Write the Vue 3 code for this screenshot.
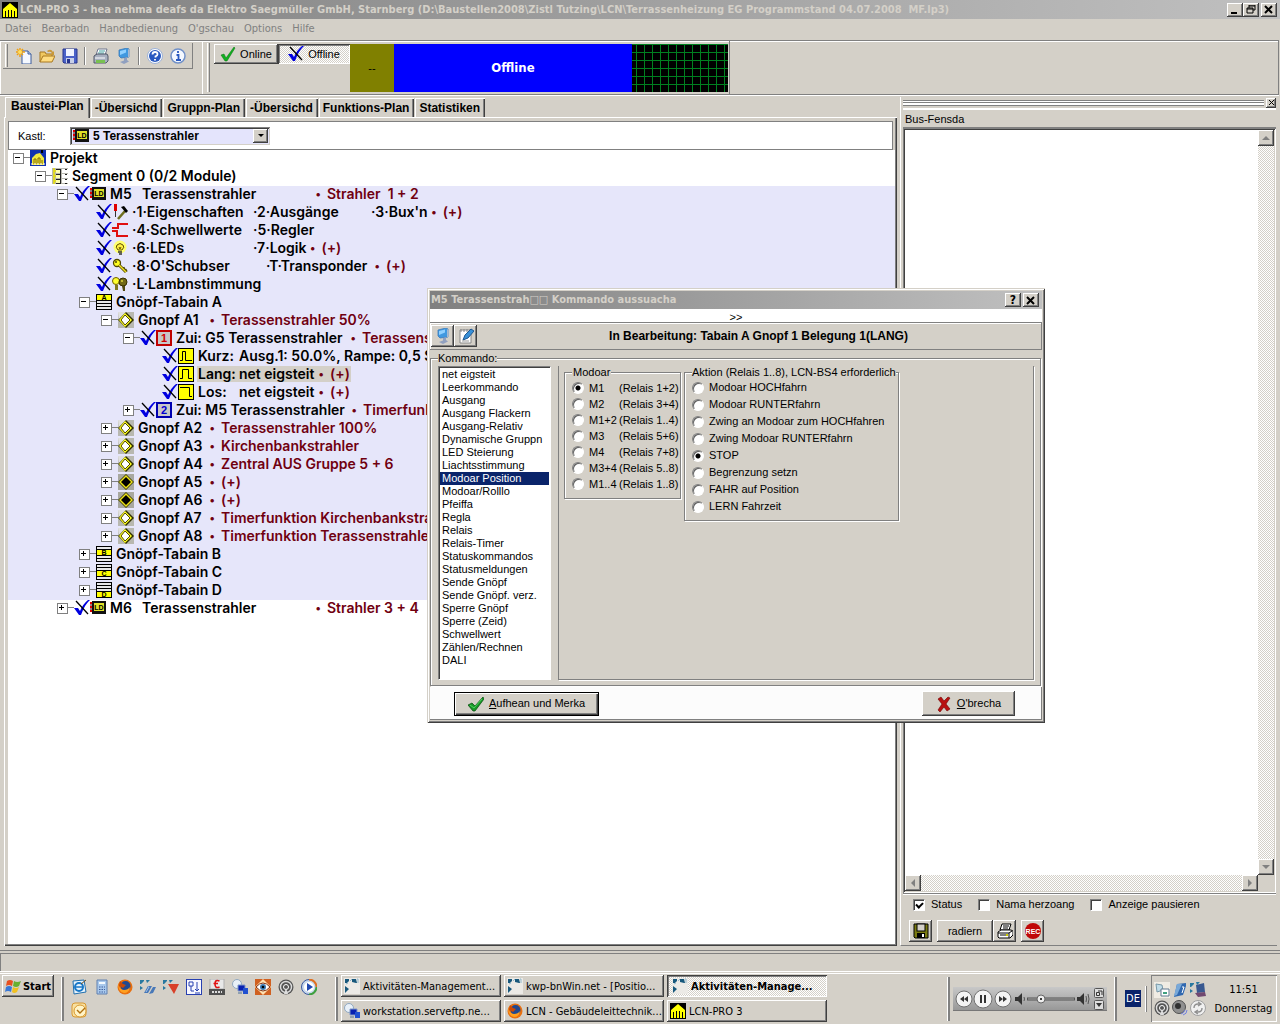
<script setup>
import { ref } from 'vue'

const icons = {
  logo: '<rect width="16" height="16" fill="#000"/><path d="M1 15V7l7-6 7 6v8h-2V9h-1v6h-2V8H9v7H7V8H6v7H4V9H3v6z" fill="#ff0"/><path d="M3 6h10L8 2z" fill="#ff0"/>',
  page: '<path d="M6 3h6l3 3v10H6z" fill="#f4f8ff" stroke="#3a5a9a"/><path d="M12 3v3h3" fill="#b8cef0" stroke="#3a5a9a"/><path d="M4 0v9M0 4h9M1 1l6 6M7 1L1 7" stroke="#f0a010" stroke-width="1.4"/><circle cx="4" cy="4" r="2" fill="#ffe060"/>',
  open: '<path d="M1 14V4h5l1 2h6v3" fill="#f0c860" stroke="#a87820"/><path d="M1 14l3-6h12l-3 6z" fill="#ffdc80" stroke="#a87820"/><path d="M8 3q4-3 6 1l1-1v4h-4l2-2q-2-2-4-1z" fill="#c89838"/>',
  save: '<path d="M1 1h14v14H2l-1-1z" fill="#4a62c8" stroke="#26348c"/><rect x="4" y="1" width="8" height="7" fill="#f0f4ff"/><rect x="4" y="10" width="8" height="5" fill="#c8d0e8"/><rect x="5" y="11" width="3" height="4" fill="#26348c"/>',
  print: '<path d="M5 1h9l-2 6H3z" fill="#fff" stroke="#707890"/><path d="M6 3h6M5 5h6" stroke="#40a0a0"/><path d="M1 8l3-2h10l1 2v5l-2 2H1z" fill="#a8b0c0" stroke="#505868"/><path d="M2 10h10" stroke="#fff"/><rect x="3" y="12" width="9" height="3" fill="#78c050"/>',
  pc: '<path d="M3 2l8-2 2 1v8l-8 1-2-2z" fill="#4098e0" stroke="#3878b8" stroke-width=".8"/><path d="M4 3l6-1.500v3L4 7z" fill="#90d0ff"/><path d="M12 1l1.500 1v7L12 9z" fill="#a8b8d0"/><path d="M8 10l3-1v3l2 1.500-5 2.500-4-2 4-1.500z" fill="#90a0c0"/>',
  help: '<circle cx="8" cy="8" r="7.500" fill="#fff" stroke="#9ab0d8"/><circle cx="8" cy="8" r="6" fill="#2858c0"/><path d="M5.500 6.500Q5.500 4 8 4t2.500 2.200Q10.500 7.500 8.500 8.300V9.500M8 11v1.500" fill="none" stroke="#fff" stroke-width="1.800"/>',
  info: '<circle cx="8" cy="8" r="7" fill="#f4f8ff" stroke="#7090c8" stroke-width="1.500"/><path d="M8 3v2M6.500 7H8.500v5M6 12h5" stroke="#2858c0" stroke-width="1.800" fill="none"/>',
  tick: '<path d="M1 9l3-1 2 4L14 1l1 1L7 15H5z" fill="#10b020" stroke="#087010" stroke-width=".5"/>',
  tickBold: '<path d="M0 9l4-2 3 3L15 1l1 2L7 15H5z" fill="#189828" stroke="#004808" stroke-width=".7"/><path d="M2 9l4 3 8-9" fill="none" stroke="#50d060"/>',
  cross: '<path d="M2 3l3-2 3 4 4-4 2 1-4 6 4 5-3 2-3-4-4 5-2-2 4-6z" fill="#b81010" stroke="#700000" stroke-width=".6"/>',
  off: '<path d="M0 8h4l2 3Q9 4 14 0h2Q11 4 7 15H5z" fill="#0000e0"/><path d="M2 1l12 13" stroke="#000" stroke-width="1.300"/>',
  project: '<rect width="16" height="16" fill="#1030b0"/><path d="M2 15V8l4-4 4-1 4 5v7z" fill="#f0e840"/><path d="M4 14V9h2v5M8 14V8h2v6M12 14v-4" stroke="#806800" fill="none"/><path d="M1 14h14" stroke="#fff" stroke-dasharray="2 1"/><path d="M11 0h2v3h-2z" fill="#000"/>',
  segment: '<rect width="16" height="16" fill="#b8b8b0"/><path d="M2 0v16M2 3h3M2 8h3M2 13h3" stroke="#e8e000" stroke-width="1.500"/><path d="M4 1h5v4H4zM4 6h5v4H4zM4 11h5v4H4z" fill="#ffffb0"/><path d="M4 1.500h5M4 6.500h5M4 11.500h5M4 15.500h5M8.500 1v14" stroke="#222" fill="none"/><path d="M10 3h6M10 8h6M10 13h6" stroke="#fff" stroke-width="4"/><path d="M13 1.500h2M13 6.500h2M13 11.500h2M13 15.500h2" stroke="#222"/>',
  module: '<path d="M0 3h3M0 7h3M0 11h3" stroke="#d00" stroke-width="2"/><path d="M0 5h3M0 9h3" stroke="#400"/><rect x="2" y="1" width="14" height="13" fill="#111"/><rect x="4" y="3" width="10" height="8" fill="#e0e028"/><text x="9" y="9.500" font-size="7" font-weight="700" text-anchor="middle" font-family="Liberation Sans, sans-serif">LD</text>',
  tools: '<path d="M2 0h3v7H2z" fill="#e00000"/><path d="M3.500 7v6" stroke="#333"/><path d="M6 15l7-8" stroke="#707020" stroke-width="2.500"/><path d="M9 3l3-1 4 5-2 2z" fill="#000"/>',
  threshold: '<path d="M16 2H6v4H0M0 9h5v5h11" fill="none" stroke="#e01010" stroke-width="2"/>',
  bulb: '<circle cx="8" cy="7" r="6.500" fill="#ffff70"/><path d="M6 10Q3 7 5 5q3-3 6 0 2 2-1 5z" fill="#fff040" stroke="#605000"/><path d="M6 12h4M7 14h3" stroke="#333" stroke-width="1.500"/><path d="M7 7l1 2 1-2" fill="none" stroke="#605000"/>',
  key: '<circle cx="5" cy="5" r="3.500" fill="#ffff20" stroke="#504800" stroke-width="1.300"/><circle cx="4" cy="4" r="1" fill="#504800"/><path d="M7 7l7 7M11 11l2-1M13 13l2-1" stroke="#504800" stroke-width="3"/><path d="M7 7l7 7" stroke="#f0e020" stroke-width="1.400"/>',
  bulbs: '<circle cx="4" cy="5" r="3.500" fill="#ffff30" stroke="#706000"/><path d="M3 9h3v5H3z" fill="#807820"/><circle cx="11" cy="6" r="4" fill="#706818" stroke="#383000"/><path d="M10 10h3v5h-2z" fill="#504810"/><circle cx="10" cy="5" r="1" fill="#e0d840"/>',
  diamond: '<rect width="16" height="16" fill="#b8b8b0"/><path d="M0 0h9L1 9z" fill="#e0e0e0"/><path d="M8 0l8 8-8 8-8-8z" fill="#303000"/><path d="M7 1l7 7-7 7-6-7z" fill="#ffff20"/><path d="M7 3l5 5-5 5-4-5z" fill="#fff" stroke="#504800"/>',
  diamondDark: '<rect width="16" height="16" fill="#a8a8a0"/><path d="M8 0l8 8-8 8-8-8z" fill="#303000"/><path d="M8 1l7 7-7 7-7-7z" fill="#e8e020"/><path d="M8 3l5 5-5 5-5-5z" fill="#000" stroke="#807800"/>',
  one: '<rect x="1" y="1" width="14" height="14" fill="#c8c8c8" stroke="#c00000" stroke-width="2"/><text x="8" y="12" font-size="11" font-weight="700" text-anchor="middle" fill="#d00000" font-family="Liberation Sans, sans-serif">1</text>',
  two: '<rect x="1" y="1" width="14" height="14" fill="#c8c8c8" stroke="#0000b0" stroke-width="2"/><text x="8" y="12" font-size="11" font-weight="700" text-anchor="middle" fill="#0000d0" font-family="Liberation Sans, sans-serif">2</text>',
  short: '<rect x=".5" y=".5" width="15" height="15" fill="#ffff00" stroke="#000"/><path d="M2 12.500h2.500v-9h3v9H14" fill="none" stroke="#000"/>',
  long: '<rect x=".5" y=".5" width="15" height="15" fill="#ffff00" stroke="#000"/><path d="M2 12.500h2.500v-9h6v9H14" fill="none" stroke="#000"/>',
  release: '<rect x=".5" y=".5" width="15" height="15" fill="#ffff00" stroke="#000"/><path d="M2 3.500h9.500v9H14" fill="none" stroke="#000"/>',
  ie: '<path d="M2 2l11-1 2 12-12 2z" fill="#e8f4fc" stroke="#2070b0"/><circle cx="8" cy="8" r="4" fill="none" stroke="#1878c8" stroke-width="2"/><path d="M5 8h6" stroke="#1878c8" stroke-width="1.500"/><path d="M10 5l5-4" stroke="#705020"/>',
  calc: '<path d="M3 1h10v14H3z" fill="#a8c8ec" stroke="#6080b0"/><path d="M5 3h6v2H5z" fill="#f4faff"/><path d="M5 8h6M5 10.500h6M5 13h6" stroke="#4060a0" stroke-dasharray="1.500 1"/>',
  firefox: '<circle cx="8" cy="8" r="7.500" fill="#e87010"/><circle cx="8.500" cy="7" r="5" fill="#204890"/><path d="M1 4q1 7 6 7 4 0 6-3-1 6-6 6-6-1-6-10z" fill="#ffa020"/><path d="M3 2l3 3 3 1-3 3-4-2z" fill="#c84808"/>',
  kwp: '<path d="M0 1h4v1l-3 3H0zM6 1h4l-3 3zM0 7l3 2-3 2z" fill="#2878a0"/><path d="M4 14l4-7h4l-4 7zM9 15l4-7h3l-3 6z" fill="#4878b8"/><path d="M8 8l1 0-3 5" stroke="#a0c0e8" fill="none"/>',
  kwpTask: '<rect width="16" height="16" fill="#eceae6"/><path d="M1 1h4v2L3 5H1zM8 1h4l1 4H12L8 4zM1 8l4 3-4 4z" fill="#18587c"/><path d="M6 3l2-2M2 6l2-1" stroke="#90b8cc"/><path d="M13 1h1v4" fill="none" stroke="#90b8cc"/>',
  kwpRed: '<path d="M0 1h4v1l-3 3H0zM6 1h4l-3 3zM0 7l3 2-3 2z" fill="#2878a0"/><path d="M5 5h11l-5 10z" fill="#d84028"/>',
  diagram: '<rect x=".5" y=".5" width="15" height="15" fill="#f8f8ff" stroke="#2840b0"/><path d="M3 3h4v4H3zM5 7v5h3M11 3v8M9 10l2 2 2-2M9 14h5" fill="none" stroke="#2840b0"/>',
  euro: '<rect x="1" y="0" width="14" height="10" fill="#e8e8e8" stroke="#b0b0b0"/><path d="M10.500 2Q6 0 6 5t4.500 3M4.500 4.500H9" fill="none" stroke="#e01010" stroke-width="1.600"/><rect x="0" y="10" width="16" height="6" fill="#505050"/><path d="M3 13h10" stroke="#ddd" stroke-width="2" stroke-dasharray="2 1"/>',
  remote: '<circle cx="5" cy="5" r="4.500" fill="#e8f0f8" stroke="#90a8c0"/><path d="M6 6h7v6H6z" fill="#0820b0" stroke="#8098c8"/><path d="M11 9h5v6h-5z" fill="#2050d0"/><path d="M6 14h4" stroke="#90a0b0" stroke-width="2"/>',
  eye: '<rect width="16" height="16" fill="#d06020"/><path d="M8 0l8 8-8 8-8-8z" fill="#ffe0b0"/><path d="M1 8q7-8 14 0-7 8-14 0z" fill="#fff" stroke="#803010"/><circle cx="8" cy="8" r="3" fill="#3878b0"/><circle cx="8" cy="8" r="1.300"/>',
  ring: '<circle cx="8" cy="8" r="7.500" fill="#555"/><circle cx="8" cy="8" r="5.500" fill="none" stroke="#ddd" stroke-width="1.400"/><circle cx="8" cy="8" r="2.500" fill="none" stroke="#fff"/><path d="M8 9l-2 6h4z" fill="#ddd"/>',
  player: '<circle cx="8" cy="8" r="7.500" fill="#c8d8ec" stroke="#3858a0"/><path d="M8 .5A7.500 7.500 0 0 1 15.500 8" fill="none" stroke="#e07020" stroke-width="2"/><path d="M15.500 8A7.500 7.500 0 0 1 8 15.500" fill="none" stroke="#40a040" stroke-width="2"/><circle cx="8" cy="8" r="5" fill="#fff"/><path d="M6 4l6 4-6 4z" fill="#2048b0"/>',
  outlook: '<rect x="1" y="1" width="14" height="14" rx="3" fill="#f8e0a0" stroke="#d89830"/><circle cx="9" cy="9" r="6" fill="#fff4c8" stroke="#d89830"/><path d="M6 8l3 3 5-5" fill="none" stroke="#b07010" stroke-width="1.400"/>',
  winflag: '<path d="M2 3q3-2 6 0L7 8Q4 6 1 8z" fill="#e85020"/><path d="M9 3q3 2 7 0l-2 5q-3 2-6 0z" fill="#68b030"/><path d="M1 9q3-2 6 0l-1 5Q3 12 0 14z" fill="#3878d8"/><path d="M8 9q3 2 6 0l-2 5q-3 2-5 0z" fill="#f0c020"/>',
  edit: '<path d="M2 2h11v13H2z" fill="#fff" stroke="#888"/><path d="M3 1v3M6 1v3M9 1v3M12 1v3" stroke="#888"/><path d="M5 12l2-5 6-6 3 2-6 7z" fill="#3890d8" stroke="#205890"/><path d="M4 13h7" stroke="#999"/>',
  disk: '<path d="M1 1h14v14H2l-1-1z" fill="#7a7a10" stroke="#000"/><rect x="4" y="1" width="8" height="7" fill="#d4d0c8" stroke="#000"/><rect x="4" y="10" width="8" height="5" fill="#000"/><rect x="9" y="11" width="2" height="3" fill="#fff"/>',
  printer: '<path d="M5 1h9l-2 6H3z" fill="#fff" stroke="#000"/><path d="M6 3h6M6 5h5" stroke="#000"/><path d="M1 9l3-2h10l2 1v4l-3 3H2l-1-1z" fill="#fff" stroke="#000"/><path d="M1 10h11l3-2M12 10v5M3 12h7" stroke="#000" fill="none"/><path d="M9 12h2" stroke="#cc0" stroke-width="2"/>',
  rec: '<circle cx="8" cy="8" r="8" fill="#c00808"/><text x="8" y="10.500" font-size="7" font-weight="700" text-anchor="middle" fill="#fff" font-family="Liberation Sans, sans-serif">REC</text>',
  trayA: '<rect width="16" height="16" fill="#f0ece4"/><path d="M2 2l6 1 1 5-6 2z" fill="#c0dce8" stroke="#7898a8"/><path d="M7 7h8v7H7z" fill="#fff" stroke="#607890"/><path d="M9 10h4v2H9z" fill="#40a080"/>',
  trayB: '<path d="M5 2l9-1 0 3-3 9-9 2 1-4z" fill="#3068b0"/><path d="M5 2l5 0-5 11-3 1z" fill="#78a8d8"/><path d="M10 5l2 0-2 6" stroke="#fff" fill="none"/>',
  trayC: '<path d="M0 1h4v1l-3 3H0zM6 0h4l-3 3zM0 7l3 2-3 2z" fill="#2878a0"/><path d="M6 3l8-2 1 9-8 1z" fill="#385890"/><path d="M5 11l10-1 1 4-8 1z" fill="#704870"/>',
  sound: '<circle cx="7" cy="7" r="6.500" fill="#909090" stroke="#505050"/><circle cx="6" cy="6" r="3" fill="#303030"/><path d="M11 15q4-1 4-5M9 14q3-1 4-4" fill="none" stroke="#7080e0"/>',
  sync: '<circle cx="8" cy="8" r="7.500" fill="#f0f0f0" stroke="#a0a0a0"/><path d="M4 8q0-4 4-4l2 0M8 2l3 2-3 2M12 8q0 4-4 4H6M8 14l-3-2 3-2" fill="none" stroke="#909090" stroke-width="1.400"/>',
}
// Key tables: a striped sheet with the yellow band of table A to D.
'ABCD'.split('').forEach((letter, i) => {
  const y = [0, 3, 6, 9][i]
  icons['table' + letter] =
    `<rect x=".5" y=".5" width="15" height="15" fill="#e8e8e8" stroke="#000"/><path d="M0 3.500h16M0 6.500h16M0 9.500h16M0 12.500h16" stroke="#000"/><rect x=".5" y="${y + 0.5}" width="15" height="6" fill="#ff0" stroke="#000"/><text x="8" y="${y + 6}" font-size="7" font-weight="700" text-anchor="middle" font-family="Liberation Sans, sans-serif">${letter}</text>`
})

const menu = ['Datei', 'Bearbadn', 'Handbedienung', "O'gschau", 'Options', 'Hilfe']
const tabs = ['Baustei-Plan', '-Übersichd', 'Gruppn-Plan', '-Übersichd', 'Funktions-Plan', 'Statistiken']

// Each tree row: level, expander, optional offline mark, icon, text columns and a remark.
const t = (text, width) => ({ text, width })
const rows = [
  { level: 0, exp: '−', icon: 'project', cols: [t('Projekt')] },
  { level: 1, exp: '−', icon: 'segment', cols: [t('Segment 0 (0/2 Module)')] },
  { level: 2, exp: '−', off: true, icon: 'module', cols: [t('M5', 32), t('Terassenstrahler', 170)], note: 'Strahler\u00a0 1 + 2', hl: true },
  { level: 3, off: true, icon: 'tools', cols: [t('·1·Eigenschaften', 121), t('·2·Ausgänge', 118), t("·3·Bux'n")], note: '(+)', hl: true },
  { level: 3, off: true, icon: 'threshold', cols: [t('·4·Schwellwerte', 121), t('·5·Regler')], hl: true },
  { level: 3, off: true, icon: 'bulb', cols: [t('·6·LEDs', 121), t('·7·Logik')], note: '(+)', hl: true },
  { level: 3, off: true, icon: 'key', cols: [t("·8·O'Schubser", 134), t('·T·Transponder', 105)], note: '(+)', hl: true },
  { level: 3, off: true, icon: 'bulbs', cols: [t('·L·Lambnstimmung')], hl: true },
  { level: 3, exp: '−', icon: 'tableA', cols: [t('Gnöpf-Tabain A')], hl: true },
  { level: 4, exp: '−', icon: 'diamond', cols: [t('Gnopf A1', 68)], note: 'Terassenstrahler 50%', hl: true },
  { level: 5, exp: '−', off: true, icon: 'one', cols: [t('Zui: G5 Terassenstrahler', 171)], note: 'Terassenstrahler 50%', hl: true },
  { level: 6, off: true, icon: 'short', cols: [t('Kurz:', 41), t('Ausg.1: 50.0%, Rampe: 0,5 S')], hl: true },
  { level: 6, off: true, icon: 'long', cols: [t('Lang:', 41), t('net eigsteit', 76)], note: '(+)', hl: true, selected: true },
  { level: 6, off: true, icon: 'release', cols: [t('Los:', 41), t('net eigsteit', 76)], note: '(+)', hl: true },
  { level: 5, exp: '+', off: true, icon: 'two', cols: [t('Zui: M5 Terassenstrahler', 172)], note: 'Timerfunktion', hl: true },
  { level: 4, exp: '+', icon: 'diamond', cols: [t('Gnopf A2', 68)], note: 'Terassenstrahler 100%', hl: true },
  { level: 4, exp: '+', icon: 'diamond', cols: [t('Gnopf A3', 68)], note: 'Kirchenbankstrahler', hl: true },
  { level: 4, exp: '+', icon: 'diamond', cols: [t('Gnopf A4', 68)], note: 'Zentral AUS Gruppe 5 + 6', hl: true },
  { level: 4, exp: '+', icon: 'diamondDark', cols: [t('Gnopf A5', 68)], note: '(+)', hl: true },
  { level: 4, exp: '+', icon: 'diamondDark', cols: [t('Gnopf A6', 68)], note: '(+)', hl: true },
  { level: 4, exp: '+', icon: 'diamond', cols: [t('Gnopf A7', 68)], note: 'Timerfunktion Kirchenbankstrahler', hl: true },
  { level: 4, exp: '+', icon: 'diamond', cols: [t('Gnopf A8', 68)], note: 'Timerfunktion Terassenstrahler', hl: true },
  { level: 3, exp: '+', icon: 'tableB', cols: [t('Gnöpf-Tabain B')], hl: true },
  { level: 3, exp: '+', icon: 'tableC', cols: [t('Gnöpf-Tabain C')], hl: true },
  { level: 3, exp: '+', icon: 'tableD', cols: [t('Gnöpf-Tabain D')], hl: true },
  { level: 2, exp: '+', off: true, icon: 'module', cols: [t('M6', 32), t('Terassenstrahler', 170)], note: 'Strahler 3 + 4' },
]

const commands = [
  'net eigsteit', 'Leerkommando', 'Ausgang', 'Ausgang Flackern', 'Ausgang-Relativ', 'Dynamische Gruppn',
  'LED Steierung', 'Liachtsstimmung', 'Modoar Position', 'Modoar/Rolllo', 'Pfeiffa', 'Regla', 'Relais',
  'Relais-Timer', 'Statuskommandos', 'Statusmeldungen', 'Sende Gnöpf', 'Sende Gnöpf. verz.', 'Sperre Gnöpf',
  'Sperre (Zeid)', 'Schwellwert', 'Zählen/Rechnen', 'DALI',
]
const command = ref('Modoar Position')

const motors = [
  ['M1', '(Relais 1+2)'], ['M2', '(Relais 3+4)'], ['M1+2', '(Relais 1..4)'], ['M3', '(Relais 5+6)'],
  ['M4', '(Relais 7+8)'], ['M3+4', '(Relais 5..8)'], ['M1..4', '(Relais 1..8)'],
]
const motor = ref('M1')
const actions = [
  'Modoar HOCHfahrn', 'Modoar RUNTERfahrn', 'Zwing an Modoar zum HOCHfahren', 'Zwing Modoar RUNTERfahrn',
  'STOP', 'Begrenzung setzn', 'FAHR auf Position', 'LERN Fahrzeit',
]
const action = ref('STOP')

const status = ref(true)
const fetchNames = ref(false)
const paused = ref(false)

const quick = ['ie', 'calc', 'firefox', 'kwp', 'kwpRed', 'diagram', 'euro', 'remote', 'eye', 'ring', 'player', 'outlook']
const tasks = [
  { icon: 'kwpTask', text: 'Aktivitäten-Management...' },
  { icon: 'kwpTask', text: 'kwp-bnWin.net - [Positio...' },
  { icon: 'kwpTask', text: 'Aktivitäten-Manage...', active: true },
  { icon: 'remote', text: 'workstation.serveftp.ne...' },
  { icon: 'firefox', text: 'LCN - Gebäudeleittechnik...' },
  { icon: 'logo', text: 'LCN-PRO 3' },
]
const tray = ['trayA', 'trayB', 'trayC', 'ring', 'sound', 'sync']
</script>

<template>
  <div class="desktop">
    <header class="titlebar">
      <svg class="ic" viewBox="0 0 16 16" v-html="icons.logo"></svg>
      <h1>LCN-PRO 3 - hea nehma deafs da Elektro Saegmüller GmbH, Starnberg (D:\Baustellen2008\Zistl Tutzing\LCN\Terrassenheizung EG Programmstand 04.07.2008&nbsp; MF.lp3)</h1>
      <div class="winbtns">
        <button class="raised" aria-label="Minimieren"><svg viewBox="0 0 10 9"><path d="M1 7h6v2H1z" /></svg></button>
        <button class="raised" aria-label="Wiederherstellen"><svg viewBox="0 0 10 9"><path d="M3 0h6v5H7M3 1h6M3 0v3M1 3h6v5H1zM1 4h6" fill="none" stroke="#000" /></svg></button>
        <button class="raised close" aria-label="Schließen"><svg viewBox="0 0 10 9"><path d="M1 1l7 7M8 1L1 8" stroke="#000" stroke-width="2" /></svg></button>
      </div>
    </header>

    <nav class="menu">
      <a v-for="m in menu" :key="m" href="#">{{ m }}</a>
    </nav>

    <section class="coolbar">
      <div class="band first">
        <div class="tools">
          <span class="grip"></span>
          <button aria-label="Neu"><svg class="ic" viewBox="0 0 16 16" v-html="icons.page"></svg></button>
          <button aria-label="Öffnen"><svg class="ic" viewBox="0 0 16 16" v-html="icons.open"></svg></button>
          <button aria-label="Speichern"><svg class="ic" viewBox="0 0 16 16" v-html="icons.save"></svg></button>
          <span class="sep"></span>
          <button aria-label="Drucken"><svg class="ic" viewBox="0 0 16 16" v-html="icons.print"></svg></button>
          <button aria-label="Bus"><svg class="ic" viewBox="0 0 16 16" v-html="icons.pc"></svg></button>
          <span class="sep"></span>
          <button aria-label="Hilfe"><svg class="ic" viewBox="0 0 16 16" v-html="icons.help"></svg></button>
          <button aria-label="Info"><svg class="ic" viewBox="0 0 16 16" v-html="icons.info"></svg></button>
        </div>
      </div>
      <div class="band second">
        <span class="grip"></span>
        <button class="mode raised"><svg class="ic" viewBox="0 0 16 16" v-html="icons.tick"></svg>Online</button>
        <button class="mode offmode pressed"><svg class="ic" viewBox="0 0 16 16" v-html="icons.off"></svg>Offline</button>
        <div class="lamp">--</div>
        <div class="state">Offline</div>
        <div class="scope"></div>
      </div>
    </section>

    <main>
      <section class="left">
        <div class="tabs" role="tablist">
          <button v-for="(tab, i) in tabs" :key="i" role="tab" :class="{ on: i === 0 }">{{ tab }}</button>
        </div>
        <div class="page">
          <div class="filter">
            <label for="kastl">Kastl:</label>
            <div class="combo">
              <svg class="ic" viewBox="0 0 16 16" v-html="icons.module"></svg>
              <select id="kastl"><option>5 Terassenstrahler</option></select>
              <span class="drop raised"><i class="tri down black"></i></span>
            </div>
          </div>
          <ul class="tree">
            <li v-for="(r, i) in rows" :key="i" :class="{ hl: r.hl }" :style="{ paddingLeft: 5 + 22 * r.level + 'px' }">
              <span class="node"><span v-if="r.exp" class="exp" :class="{ plus: r.exp === '+' }"></span></span>
              <svg v-if="r.off" class="ic" viewBox="0 0 16 16" v-html="icons.off"></svg>
              <svg class="ic" viewBox="0 0 16 16" v-html="icons[r.icon]"></svg>
              <span class="label" :class="{ selected: r.selected }">
                <span v-for="(c, j) in r.cols" :key="j" :style="c.width ? { width: c.width + 'px' } : null">{{ c.text }}</span>
                <span v-if="r.note" class="note"><b>•</b>{{ r.note }}</span>
              </span>
            </li>
          </ul>
        </div>
      </section>

      <aside class="right">
        <div class="dockbar"><span class="lines"></span><button class="raised" aria-label="Schließen"><svg viewBox="0 0 7 7"><path d="M1 1l5 5M6 1L1 6" stroke="#000" /></svg></button></div>
        <h2>Bus-Fensda</h2>
        <div class="memo">
          <textarea aria-label="Bus-Fensda"></textarea>
          <div class="vbar"><span class="raised"><i class="tri up"></i></span><span class="raised"><i class="tri down"></i></span></div>
          <div class="hbar"><span class="raised"><i class="tri lt"></i></span><span class="raised"><i class="tri rt"></i></span></div>
        </div>
        <div class="checks">
          <label><input v-model="status" type="checkbox" />Status</label>
          <label><input v-model="fetchNames" type="checkbox" />Nama herzoang</label>
          <label><input v-model="paused" type="checkbox" />Anzeige pausieren</label>
        </div>
        <div class="actions">
          <button class="raised sq" aria-label="Speichern"><svg class="ic" viewBox="0 0 16 16" v-html="icons.disk"></svg></button>
          <button class="raised wide">radiern</button>
          <button class="raised sq" aria-label="Drucken"><svg class="ic" viewBox="0 0 16 16" v-html="icons.printer"></svg></button>
          <button class="raised sq rec" aria-label="Aufnahme"><svg class="ic" viewBox="0 0 16 16" v-html="icons.rec"></svg></button>
        </div>
      </aside>
    </main>

    <div class="statusbar"></div>

    <footer class="taskbar">
      <button class="start raised"><svg class="ic" viewBox="0 0 16 16" v-html="icons.winflag"></svg>Start</button>
      <span class="tsep"></span>
      <div class="quick">
        <button v-for="q in quick" :key="q" :aria-label="q"><svg class="ic" viewBox="0 0 16 16" v-html="icons[q]"></svg></button>
      </div>
      <span class="tsep"></span>
      <div class="tasks">
        <button v-for="(k, i) in tasks" :key="i" :class="k.active ? 'pressed' : 'raised'">
          <svg class="ic" viewBox="0 0 16 16" v-html="icons[k.icon]"></svg><span>{{ k.text }}</span>
        </button>
      </div>
      <span class="tsep"></span>
      <div class="player">
        <svg width="154" height="24" viewBox="0 0 154 24">
          <g fill="#f4f4f4" stroke="#707070"><circle cx="11" cy="12" r="8" /><circle cx="30" cy="12" r="9" /><circle cx="50" cy="12" r="8" /></g>
          <path d="M11 9v6l-4-3zM15 9v6l-4-3zM46 9v6l4-3zM50 9v6l4-3zM27 8h2v8h-2zM31 8h2v8h-2zM62 10h3l4-4v12l-4-4h-3zM124 10h3l4-4v12l-4-4h-3z" fill="#333" />
          <path d="M71 10q1 2 0 4M133 9q1 3 0 6M135 7q2 5 0 10" fill="none" stroke="#555" />
          <path d="M74 12h48" stroke="#555" stroke-width="3" /><path d="M75 12h46" stroke="#aaa" />
          <circle cx="88" cy="12" r="4" fill="#eee" stroke="#666" /><circle cx="88" cy="12" r="1" />
          <g fill="#ddd" stroke="#555"><rect x="141.500" y="1.500" width="9" height="9" rx="1" /><rect x="141.500" y="13.500" width="9" height="9" rx="1" /></g>
          <path d="M143.500 5.500h3v3h-3zM145 4h4v4" fill="none" stroke="#333" /><path d="M143 16h6l-3 4z" fill="#333" />
        </svg>
      </div>
      <span class="tsep"></span>
      <div class="lang">DE</div>
      <span class="tsep small"></span>
      <div class="tray">
        <div class="trayicons"><svg v-for="(k, i) in tray" :key="i" class="ic" viewBox="0 0 16 16" v-html="icons[k]"></svg></div>
        <div class="clock"><time>11:51</time><span>Donnerstag</span></div>
      </div>
    </footer>

    <section class="dialog" role="dialog" aria-labelledby="dlg-title">
      <div class="dtitle">
        <h2 id="dlg-title">M5 Terassenstrah□□ Kommando aussuacha</h2>
        <button class="raised" aria-label="Hilfe">?</button>
        <button class="raised" aria-label="Schließen"><svg viewBox="0 0 10 9"><path d="M1 1l7 7M8 1L1 8" stroke="#000" stroke-width="2" /></svg></button>
      </div>
      <div class="more">&gt;&gt;</div>
      <div class="dtools">
        <button class="raised sq" aria-label="Modul"><svg class="ic" viewBox="0 0 16 16" v-html="icons.pc"></svg></button>
        <button class="raised sq" aria-label="Bearbeiten"><svg class="ic" viewBox="0 0 16 16" v-html="icons.edit"></svg></button>
        <strong>In Bearbeitung: Tabain A Gnopf 1 Belegung 1(LANG)</strong>
      </div>
      <fieldset class="outer">
        <legend><label for="cmd">Kommando:</label></legend>
        <div class="body">
          <select id="cmd" v-model="command" size="24">
            <option v-for="c in commands" :key="c">{{ c }}</option>
          </select>
          <div class="panel">
            <fieldset class="motor">
              <legend>Modoar</legend>
              <label v-for="m in motors" :key="m[0]"><input v-model="motor" type="radio" name="motor" :value="m[0]" /><span>{{ m[0] }}</span>{{ m[1] }}</label>
            </fieldset>
            <fieldset class="action">
              <legend>Aktion (Relais 1..8), LCN-BS4 erforderlich</legend>
              <label v-for="a in actions" :key="a"><input v-model="action" type="radio" name="action" :value="a" />{{ a }}</label>
            </fieldset>
          </div>
        </div>
      </fieldset>
      <div class="dfoot">
        <button class="ok"><svg class="ic" viewBox="0 0 16 16" v-html="icons.tickBold"></svg><span><u>A</u>ufhean und Merka</span></button>
        <button class="cancel raised"><svg class="ic" viewBox="0 0 16 16" v-html="icons.cross"></svg><span><u>O</u>'brecha</span></button>
      </div>
    </section>
  </div>
</template>

<style>
body { margin: 0; background: #d4d0c8; }
</style>

<style scoped>
* { box-sizing: border-box; }
.desktop {
  --ui: "DejaVu Sans Condensed", "DejaVu Sans", sans-serif;
  position: relative;
  min-height: 100vh;
  display: flex;
  flex-direction: column;
  background: #d4d0c8;
  color: #000;
  font: 11px/13px "Liberation Sans", Arial, sans-serif;
  overflow: hidden;
}
button, select, textarea { font: inherit; color: inherit; margin: 0; padding: 0; border: 0; background: #d4d0c8; border-radius: 0; outline: 0; }
button { display: flex; align-items: center; justify-content: center; white-space: nowrap; }
h1, h2 { margin: 0; font: inherit; white-space: nowrap; }
.ic { width: 16px; height: 16px; flex: none; display: block; }
.raised { background: #d4d0c8; box-shadow: inset -1px -1px #404040, inset 1px 1px #fff, inset -2px -2px #808080; }
.pressed {
  background: repeating-conic-gradient(#fff 0 25%, #d4d0c8 0 50%) 0 0 / 2px 2px;
  box-shadow: inset 1px 1px #404040, inset -1px -1px #fff, inset 2px 2px #808080;
}

.titlebar { height: 19px; display: flex; align-items: center; padding: 0 3px 0 2px; background: linear-gradient(90deg, #808080, #c0c0c0); color: #d4d0c8; }
.titlebar h1 { font: bold 11px/18px var(--ui); margin-left: 2px; flex: 1; min-width: 0; overflow: hidden; }
.winbtns { display: flex; }
.winbtns button { width: 16px; height: 14px; }
.winbtns svg { width: 10px; height: 9px; }
.winbtns .close { margin-left: 2px; }

.menu { height: 21px; display: flex; gap: 10px; padding: 3px 5px; font: 11px/14px var(--ui); }
.menu a { color: #808080; text-decoration: none; }

.coolbar { height: 55px; display: flex; margin-right: 1px; border: 1px solid #808080; border-left: 0; box-shadow: inset 0 1px #fff, 0 1px #fff; }
.band { padding: 2px 0 2px 2px; }
.first { width: 202px; border-left: 1px solid #fff; }
.second { border-left: 1px solid #fff; box-shadow: inset -1px 0 #808080; display: flex; align-items: flex-start; padding-left: 4px; padding-right: 2px; }
.tools { width: 190px; height: 26px; display: flex; align-items: center; border-right: 1px solid #808080; border-bottom: 1px solid #808080; }
.tools button { width: 23px; height: 22px; }
.grip { width: 3px; align-self: stretch; margin: 1px 4px 1px 2px; background: #d4d0c8; border-left: 1px solid #fff; border-right: 1px solid #808080; }
.second .grip { margin: 0 4px 0 0; }
.sep { width: 2px; height: 18px; margin: 0 3px; border-left: 1px solid #808080; border-right: 1px solid #fff; }
.mode { width: 64px; height: 20px; gap: 4px; margin-top: 1px; }
.offmode { width: 72px; }
.lamp { width: 44px; height: 48px; background: #808000; margin-top: 1px; text-align: center; line-height: 48px; }
.state { width: 238px; height: 48px; background: #00f; color: #fff; margin-top: 1px; text-align: center; font: bold 13px/48px var(--ui); }
.scope {
  width: 96px; height: 48px; margin-top: 1px; background-color: #000;
  background-image: linear-gradient(90deg, #008020 1px, transparent 1px), linear-gradient(#008020 1px, transparent 1px);
  background-size: 8px 8px; background-position: 4px 0;
}

main { flex: 1; display: flex; gap: 3px; padding: 2px 3px 4px 4px; border-bottom: 1px solid #808080; min-height: 0; }
.left { flex: 1; min-width: 0; display: flex; flex-direction: column; }
.tabs { display: flex; height: 20px; align-items: flex-end; padding-left: 1px; gap: 1px; position: relative; z-index: 1; }
.tabs button { height: 19px; padding: 1px 5px 0 4px; font-weight: bold; font-size: 12px; box-shadow: inset 1px 1px #fff, inset -1px 0 #404040, inset -2px 0 #808080; }
.tabs .on { height: 21px; margin-bottom: -1px; padding: 0 6px 2px; }
.page { flex: 1; display: flex; flex-direction: column; padding: 4px 2px 2px 4px; box-shadow: inset 1px 1px #fff, inset -1px -1px #404040, inset -2px -2px #808080; }
.filter { height: 29px; display: flex; align-items: center; padding-left: 9px; background: #fff; border: 1px solid #808080; margin-right: 2px; }
.filter label { width: 52px; padding-top: 2px; }
.combo { position: relative; width: 200px; height: 18px; background: #e4e4fc; display: flex; align-items: center; padding: 0 2px 0 3px; box-shadow: inset 1px 1px #808080, inset -1px -1px #d4d0c8, inset 2px 2px #404040; }
.combo select { flex: 1; min-width: 0; appearance: none; background: transparent; font-weight: bold; font-size: 12px; padding-left: 4px; height: 14px; line-height: 14px; }
.drop { width: 15px; height: 14px; display: grid; place-items: center; pointer-events: none; }
.tri { width: 0; height: 0; border: 4px solid transparent; }
.up { border-top: 0; border-bottom-color: #808080; }
.down { border-bottom: 0; border-top-color: #808080; }
.lt { border-left: 0; border-right-color: #808080; }
.rt { border-right: 0; border-left-color: #808080; }
.black { border-width: 3px 3px 0; border-top-color: #000; }

.tree { flex: 1; margin: 0; padding: 0; list-style: none; background: #fff; font: 600 14px/16px Inter, "Liberation Sans", sans-serif; }
.tree li { height: 18px; padding-bottom: 2px; display: flex; align-items: center; white-space: nowrap; overflow: hidden; }
.hl { background: #e6e6fa; }
.node { width: 17px; height: 10px; flex: none; display: flex; }
.exp { width: 17px; height: 9px; background: linear-gradient(#808080, #808080) 9px 4px / 8px 1px no-repeat; display: flex; }
.exp::before { content: ""; width: 9px; height: 9px; border: 1px solid #808080; background: linear-gradient(#000, #000) 1px 3px / 5px 1px no-repeat #fff; }
.plus::before { background: linear-gradient(#000, #000) 1px 3px / 5px 1px no-repeat, linear-gradient(#000, #000) 3px 1px / 1px 5px no-repeat, #fff; }
.label { display: flex; margin-left: 3px; padding: 0 1px; height: 16px; }
.label > span { flex: none; }
.selected { background: #d4d0c8; }
.note { color: #700010; }
.note b { display: inline-block; width: 15px; padding-left: 4px; font-size: 11px; line-height: 10px; vertical-align: 1px; }

.right { flex: 0 0 377px; display: flex; flex-direction: column; padding: 0 1px 0 2px; border-left: 1px solid #fff; border-bottom: 1px solid #808080; }
.dockbar { height: 13px; display: flex; align-items: center; gap: 2px; border-bottom: 2px solid #fff; }
.lines { flex: 1; height: 6px; border-top: 1px solid #808080; border-bottom: 1px solid #808080; background: linear-gradient(#fff 1px, #808080 1px 2px, #fff 2px); }
.dockbar button { width: 10px; height: 10px; }
.dockbar svg { width: 7px; height: 7px; }
.right h2 { height: 18px; line-height: 18px; padding-left: 2px; border-bottom: 1px solid #808080; }
.memo { flex: 1; display: grid; grid-template: 1fr 16px / 1fr 16px; padding: 2px; box-shadow: inset 1px 1px #808080, inset -1px -1px #fff, inset 2px 2px #404040; }
.memo textarea { background: #fff; resize: none; display: block; width: 100%; height: 100%; }
.vbar, .hbar { display: flex; justify-content: space-between; background: repeating-conic-gradient(#fff 0 25%, #d4d0c8 0 50%) 0 0 / 2px 2px; }
.vbar { flex-direction: column; }
.vbar span, .hbar span { width: 16px; height: 16px; display: grid; place-items: center; }
.checks { display: flex; height: 22px; align-items: center; padding-left: 10px; gap: 16px; border-top: 1px solid #808080; box-shadow: inset 0 1px #fff; }
.checks label { display: flex; align-items: center; gap: 6px; }
.checks input { appearance: none; margin: 0; width: 12px; height: 12px; background: #fff; border: 1px solid; border-color: #808080 #fff #fff #808080; box-shadow: inset 1px 1px #404040; position: relative; }
.checks input:checked::after { content: ""; position: absolute; left: 3px; top: 1px; width: 3px; height: 5px; border: solid #000; border-width: 0 2px 2px 0; transform: rotate(45deg); }
.actions { display: flex; padding: 5px 6px 3px; }
.sq { width: 23px; height: 22px; }
.wide { width: 56px; height: 22px; margin-left: 5px; }
.rec { margin-left: 5px; }

.statusbar { height: 18px; margin-top: 2px; border-top: 1px solid #808080; border-left: 1px solid #808080; }

.taskbar { height: 53px; display: flex; align-items: flex-start; padding: 3px 3px 3px 2px; border-top: 1px solid #fff; box-shadow: inset 0 1px #d4d0c8, inset 0 2px #fff; font: 11px/13px var(--ui); }
.start { width: 52px; height: 22px; gap: 2px; font-weight: bold; }
.tsep { width: 3px; height: 44px; margin: 2px 3px 0 7px; border-left: 1px solid #fff; border-right: 2px solid #808080; flex: none; }
.quick { display: grid; grid-template-columns: repeat(11, 23px); grid-auto-rows: 23px; width: 261px; }
.tasks { display: grid; grid-template-columns: repeat(3, 160px); grid-auto-rows: 22px; gap: 3px; flex: 1; }
.tasks button { justify-content: flex-start; gap: 3px; padding: 0 0 0 3px; min-width: 0; }
.tasks button span { padding-top: 1px; }
.tasks .pressed { font-weight: bold; padding-left: 5px; }
.player { width: 154px; height: 24px; margin-top: 12px; background: linear-gradient(#c8c8c8, #989898); border-bottom: 1px solid #777; }
.player svg { display: block; }
.lang { width: 16px; height: 17px; margin: 15px 0 0 5px; background: #0a246a; color: #fff; text-align: center; line-height: 17px; }
.small { height: 26px; width: 2px; margin: 11px 4px 0 4px; border-left: 1px solid #fff; border-right: 1px solid #808080; }
.tray { width: 126px; height: 47px; display: flex; align-items: center; padding-left: 3px; gap: 4px; box-shadow: inset 1px 1px #808080, inset -1px -1px #fff; }
.trayicons { display: grid; grid-template-columns: repeat(3, 16px); gap: 2px; }
.clock { flex: 1; text-align: center; display: flex; flex-direction: column; gap: 6px; }

.dialog { position: absolute; left: 427px; top: 288px; width: 618px; padding: 3px; background: #d4d0c8; box-shadow: inset 1px 1px #d4d0c8, inset -1px -1px #404040, inset 2px 2px #fff, inset -2px -2px #808080; }
.dtitle { height: 18px; display: flex; align-items: center; padding-right: 3px; gap: 2px; background: linear-gradient(90deg, #808080, #c0c0c0); color: #d4d0c8; }
.dtitle h2 { flex: 1; font: bold 11px/18px var(--ui); padding-left: 1px; }
.dtitle button { width: 16px; height: 14px; color: #000; font: bold 12px/12px var(--ui); }
.dtitle svg { width: 10px; height: 9px; }
.more { height: 14px; background: #fff; border-bottom: 1px solid #808080; text-align: center; line-height: 16px; }
.dtools { height: 27px; display: flex; align-items: center; border: 1px solid #808080; border-width: 0 1px 1px 0; box-shadow: inset 1px 1px #fff; margin-bottom: 2px; padding-left: 1px; }
.dtools strong { flex: 1; text-align: center; font-size: 12px; padding-right: 1px; }
fieldset { border: 1px solid #808080; box-shadow: 1px 1px #fff, inset 1px 1px #fff; margin: 0; min-width: 0; }
legend { background: #d4d0c8; padding: 0 1px; line-height: 13px; white-space: nowrap; }
.outer { padding: 1px 6px 5px 7px; margin: 0 1px 0 0; }
.outer > legend { padding: 0; }
.body { display: flex; gap: 7px; }
.body select { width: 113px; height: 314px; overflow: hidden; background: #fff; border: 1px solid; border-color: #808080 #fff #fff #808080; box-shadow: inset 1px 1px #404040; padding: 1px; }
.body option { height: 13px; min-height: 13px; line-height: 13px; padding: 0 0 0 2px; }
.body option:checked { background: linear-gradient(#0a246a, #0a246a); -webkit-text-fill-color: #fff; }
.panel { flex: 1; display: flex; align-items: flex-start; gap: 3px; padding: 0 0 0 5px; border: 1px solid #808080; border-top: 0; box-shadow: 1px 1px #fff; }
.panel fieldset label { display: flex; align-items: center; white-space: nowrap; }
.motor { width: 117px; padding: 1px 0 6px 7px; }
.motor label { height: 16px; }
.motor span { width: 30px; }
.action { width: 215px; padding: 0 0 5px 7px; }
.action label { height: 17px; }
.action legend { padding: 0; }
.panel input {
  appearance: none; width: 12px; height: 12px; margin: 0 5px 0 0; border-radius: 50%; background: #fff; flex: none;
  border: 1px solid; border-color: #808080 #fff #fff #808080; box-shadow: inset 1px 1px #606060;
}
.panel input:checked { background: radial-gradient(circle at 5px 5px, #000 2px, #fff 3px); }
.dfoot { height: 33px; display: flex; justify-content: space-between; align-items: center; padding: 0 27px 0 24px; background: #fcfcfc; box-shadow: inset -1px -1px #808080; margin-top: 1px; }
.dfoot button { gap: 5px; }
.ok { width: 145px; height: 24px; border: 1px solid #000; box-shadow: inset 1px 1px #fff, inset -1px -1px #404040, inset -2px -2px #808080; }
.cancel { width: 93px; height: 25px; }
</style>
